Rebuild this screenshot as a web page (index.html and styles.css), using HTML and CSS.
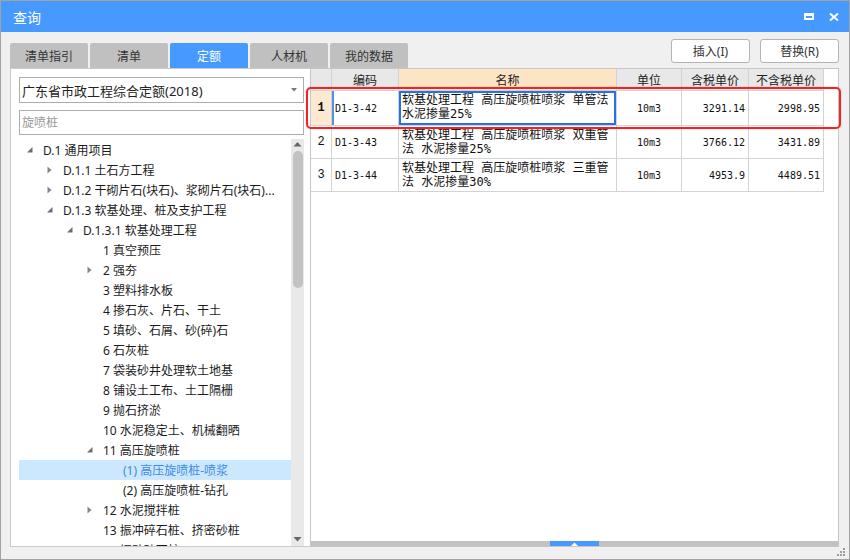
FILE: index.html
```html
<!DOCTYPE html>
<html lang="zh-CN">
<head>
<meta charset="utf-8">
<title>查询</title>
<link rel="stylesheet" href="styles.css">
</head>
<body>
<div class="win">
  <div class="titlebar">
    <span class="title">查询</span>
    <div class="tb-icons">
      <svg width="10" height="7" viewBox="0 0 10 7"><path fill="#fff" fill-rule="evenodd" d="M0 0H10V7H0Z M2 3V5H8V3Z"/></svg>
      <svg width="10" height="8" viewBox="0 0 10 8"><path d="M1 0.5L9 7.5M9 0.5L1 7.5" stroke="#fff" stroke-width="2"/></svg>
    </div>
  </div>

  <div class="toolbar">
    <div class="tabs">
      <div class="tab">清单指引</div>
      <div class="tab">清单</div>
      <div class="tab active">定额</div>
      <div class="tab">人材机</div>
      <div class="tab">我的数据</div>
    </div>
    <div class="btns">
      <button class="btn">插入(I)</button>
      <button class="btn">替换(R)</button>
    </div>
  </div>

  <div class="panes">
    <div class="left">
      <div class="select">
        <span>广东省市政工程综合定额(2018)</span>
        <svg class="caret" width="6" height="4" viewBox="0 0 6 4"><path d="M0 0H6L3 3.5Z" fill="#7a7a7a"/></svg>
      </div>
      <input class="search" placeholder="旋喷桩">
      <div class="tree">
        <div class="tree-list">
          <div class="node l0"><svg class="tw" viewBox="0 0 16 20"><path d="M5.5 7V12.5H0Z" fill="#6e6e6e"/></svg>D.1 通用项目</div>
          <div class="node l1"><svg class="tw" viewBox="0 0 16 20"><path d="M0.5 6.5L4.5 10L0.5 13.5Z" fill="#858585"/></svg>D.1.1 土石方工程</div>
          <div class="node l1"><svg class="tw" viewBox="0 0 16 20"><path d="M0.5 6.5L4.5 10L0.5 13.5Z" fill="#858585"/></svg>D.1.2 干砌片石(块石)、浆砌片石(块石)...</div>
          <div class="node l1"><svg class="tw" viewBox="0 0 16 20"><path d="M5.5 7V12.5H0Z" fill="#6e6e6e"/></svg>D.1.3 软基处理、桩及支护工程</div>
          <div class="node l2"><svg class="tw" viewBox="0 0 16 20"><path d="M5.5 7V12.5H0Z" fill="#6e6e6e"/></svg>D.1.3.1 软基处理工程</div>
          <div class="node l3"><span class="tw"></span>1 真空预压</div>
          <div class="node l3"><svg class="tw" viewBox="0 0 16 20"><path d="M0.5 6.5L4.5 10L0.5 13.5Z" fill="#858585"/></svg>2 强夯</div>
          <div class="node l3"><span class="tw"></span>3 塑料排水板</div>
          <div class="node l3"><span class="tw"></span>4 掺石灰、片石、干土</div>
          <div class="node l3"><span class="tw"></span>5 填砂、石屑、砂(碎)石</div>
          <div class="node l3"><span class="tw"></span>6 石灰桩</div>
          <div class="node l3"><span class="tw"></span>7 袋装砂井处理软土地基</div>
          <div class="node l3"><span class="tw"></span>8 铺设土工布、土工隔栅</div>
          <div class="node l3"><span class="tw"></span>9 抛石挤淤</div>
          <div class="node l3"><span class="tw"></span>10 水泥稳定土、机械翻晒</div>
          <div class="node l3"><svg class="tw" viewBox="0 0 16 20"><path d="M5.5 7V12.5H0Z" fill="#6e6e6e"/></svg>11 高压旋喷桩</div>
          <div class="node l4 sel"><span class="tw"></span>(1) 高压旋喷桩-喷浆</div>
          <div class="node l4"><span class="tw"></span>(2) 高压旋喷桩-钻孔</div>
          <div class="node l3"><svg class="tw" viewBox="0 0 16 20"><path d="M0.5 6.5L4.5 10L0.5 13.5Z" fill="#858585"/></svg>12 水泥搅拌桩</div>
          <div class="node l3"><span class="tw"></span>13 振冲碎石桩、挤密砂桩</div>
          <div class="node l3"><span class="tw"></span>14 振动砂石桩</div>
        </div>
        <div class="vscroll">
          <svg class="arr" width="13" height="12" viewBox="0 0 13 12"><path d="M2.5 7.5H10.5L6.5 3Z" fill="#666"/></svg>
          <div class="thumb"></div>
          <svg class="arr down" width="13" height="12" viewBox="0 0 13 12"><path d="M2.5 4H10.5L6.5 8.5Z" fill="#666"/></svg>
        </div>
      </div>
    </div>

    <div class="right">
      <div class="grid">
        <div class="c h"></div>
        <div class="c h">编码</div>
        <div class="c h act">名称</div>
        <div class="c h">单位</div>
        <div class="c h">含税单价</div>
        <div class="c h">不含税单价</div>

        <div class="c num cur">1</div>
        <div class="c code cur">D1-3-42</div>
        <div class="c name edit"><span class="txt">软基处理工程 高压旋喷桩喷浆 单管法 水泥掺量25%</span></div>
        <div class="c unit">10m3</div>
        <div class="c price">3291.14</div>
        <div class="c price">2998.95</div>

        <div class="c num">2</div>
        <div class="c code">D1-3-43</div>
        <div class="c name"><span class="txt">软基处理工程 高压旋喷桩喷浆 双重管法 水泥掺量25%</span></div>
        <div class="c unit">10m3</div>
        <div class="c price">3766.12</div>
        <div class="c price">3431.89</div>

        <div class="c num">3</div>
        <div class="c code">D1-3-44</div>
        <div class="c name"><span class="txt">软基处理工程 高压旋喷桩喷浆 三重管法 水泥掺量30%</span></div>
        <div class="c unit">10m3</div>
        <div class="c price">4953.9</div>
        <div class="c price">4489.51</div>
      </div>
      <div class="splitter">
        <div class="handle"><svg width="7" height="4" viewBox="0 0 7 4"><path d="M0 4H7L3.5 0.5Z" fill="#fff"/></svg></div>
      </div>
    </div>
  </div>

  <div class="footer"></div>

  <svg class="grip" width="9" height="9" viewBox="0 0 9 9" fill="#9d9d9d">
    <rect x="6" y="0" width="2" height="2"/>
    <rect x="3" y="3" width="2" height="2"/><rect x="6" y="3" width="2" height="2"/>
    <rect x="0" y="6" width="2" height="2"/><rect x="3" y="6" width="2" height="2"/><rect x="6" y="6" width="2" height="2"/>
  </svg>
  <div class="mark"></div>
</div>
</body>
</html>
```

FILE: styles.css
```css
* { box-sizing: border-box; }

body {
  margin: 0;
  font-family: "Noto Sans", "Noto Sans CJK SC", sans-serif;
}

.win {
  position: relative;
  width: 850px;
  height: 560px;
  border: 1px solid #a3a3a3;
  background: #f0f0f0;
  display: flex;
  flex-direction: column;
}

.titlebar {
  height: 31px;
  flex: none;
  background: #4599ff;
  color: #fff;
  display: flex;
  align-items: center;
  padding: 0 10px 0 12px;
}
.title { font-size: 14px; }
.tb-icons {
  margin-left: auto;
  display: flex;
  align-items: center;
  gap: 15px;
}
.tb-icons svg { display: block; }

.toolbar {
  height: 36px;
  flex: none;
  display: flex;
  align-items: flex-end;
  padding: 0 10px 0 9px;
}
.tabs { display: flex; gap: 2px; }
.tab {
  width: 78px;
  height: 25px;
  background: #c0c0c0;
  border-radius: 2px 2px 0 0;
  font-size: 12px;
  color: #333;
  display: flex;
  align-items: center;
  justify-content: center;
}
.tab.active { background: #4599ff; color: #fff; }

.btns {
  margin-left: auto;
  margin-bottom: 5px;
  display: flex;
  gap: 10px;
}
.btn {
  width: 79px;
  height: 24px;
  padding: 0;
  background: #fff;
  border: 1px solid #b4b4b4;
  border-radius: 3px;
  font-family: "Noto Sans", "Noto Sans CJK SC", sans-serif;
  font-size: 12px;
  color: #333;
}

.panes {
  height: 479px;
  flex: none;
  display: flex;
  padding: 0 10px 0 9px;
}

.left {
  width: 300px;
  flex: none;
  background: #fff;
  border: 1px solid #cacaca;
  border-right: none;
  padding: 8px 6px 0 8px;
  display: flex;
  flex-direction: column;
}
.select {
  height: 26px;
  flex: none;
  border: 1px solid #adadad;
  display: flex;
  align-items: center;
  padding: 0 6px 0 2px;
  font-size: 13px;
  color: #222;
}
.caret { margin-left: auto; display: block; }
.search {
  margin-top: 7px;
  height: 25px;
  flex: none;
  width: 100%;
  border: 1px solid #adadad;
  border-radius: 0;
  padding: 0 2px;
  font-family: "Noto Sans", "Noto Sans CJK SC", sans-serif;
  font-size: 12px;
  color: #222;
  outline: none;
}
.search::placeholder { color: #9a9a9a; }

.tree {
  margin-top: 4px;
  flex: 1;
  min-height: 0;
  display: flex;
  overflow: hidden;
}
.tree-list {
  flex: 1;
  min-width: 0;
  padding-top: 1px;
  overflow: hidden;
}
.node {
  height: 20px;
  display: flex;
  align-items: center;
  font-size: 12px;
  color: #1c1c1c;
  white-space: nowrap;
  overflow: hidden;
}
.node .tw { width: 16px; height: 20px; flex: none; display: block; }
.node.sel { background: #cce8ff; color: #3b8ae6; }
.l0 { padding-left: 8px; }
.l1 { padding-left: 28px; }
.l2 { padding-left: 48px; }
.l3 { padding-left: 68px; }
.l4 { padding-left: 88px; }

.vscroll {
  width: 13px;
  flex: none;
  background: #e9e9e9;
  display: flex;
  flex-direction: column;
  align-items: center;
}
.arr { display: block; flex: none; }
.arr.down { margin-top: auto; margin-bottom: 1px; }
.thumb {
  width: 10px;
  height: 137px;
  flex: none;
  background: #c2c2c2;
  border-radius: 5px;
}

.right {
  flex: 1;
  background: #fff;
  border: 1px solid #c6c6c6;
  display: flex;
  flex-direction: column;
}
.grid {
  display: grid;
  grid-template-columns: 21px 67px 218px 65px 67px 75px;
  grid-template-rows: 22px 35px 33px 33px;
  width: 513px;
}
.c {
  border-right: 1px solid #d3d3d3;
  border-bottom: 1px solid #d3d3d3;
  display: flex;
  align-items: center;
  overflow: hidden;
  color: #111;
}
.h {
  background: #e8e8e8;
  justify-content: center;
  font-size: 12px;
  color: #222;
}
.h.act { background: #fde4c5; }
.num {
  justify-content: center;
  font-family: "Liberation Mono", monospace;
  font-size: 12px;
}
.num.cur { background: #fde9d1; font-weight: bold; }
.code {
  padding-left: 3px;
  font-family: "DejaVu Sans Mono", monospace;
  font-size: 10px;
}
.code.cur { box-shadow: inset 2px 0 0 #4a94ee; }
.name {
  padding: 0 3px;
  font-family: "DejaVu Sans Mono", "Noto Sans CJK SC", monospace;
  font-size: 12px;
  line-height: 14px;
}
.name .txt { display: block; }
.name.edit {
  align-items: flex-start;
  padding-top: 2px;
  box-shadow: inset 0 0 0 2px #2471e8;
}
.unit {
  justify-content: center;
  font-family: "DejaVu Sans Mono", monospace;
  font-size: 10px;
}
.price {
  justify-content: flex-end;
  padding-right: 3px;
  font-family: "DejaVu Sans Mono", monospace;
  font-size: 10px;
}

.splitter {
  margin-top: auto;
  height: 5px;
  flex: none;
  background: #c2c2c2;
  display: flex;
  justify-content: center;
}
.handle {
  width: 49px;
  background: #4599ff;
  display: flex;
  align-items: center;
  justify-content: center;
}
.handle svg { display: block; }

.footer { flex: 1; }

.grip {
  position: absolute;
  right: 3px;
  bottom: 2px;
}

.mark {
  position: absolute;
  left: 305px;
  top: 86px;
  width: 535px;
  height: 42px;
  border: 2px solid #f02424;
  border-radius: 5px;
  box-shadow: 0 0 1px rgba(240, 36, 36, 0.7);
}
```
